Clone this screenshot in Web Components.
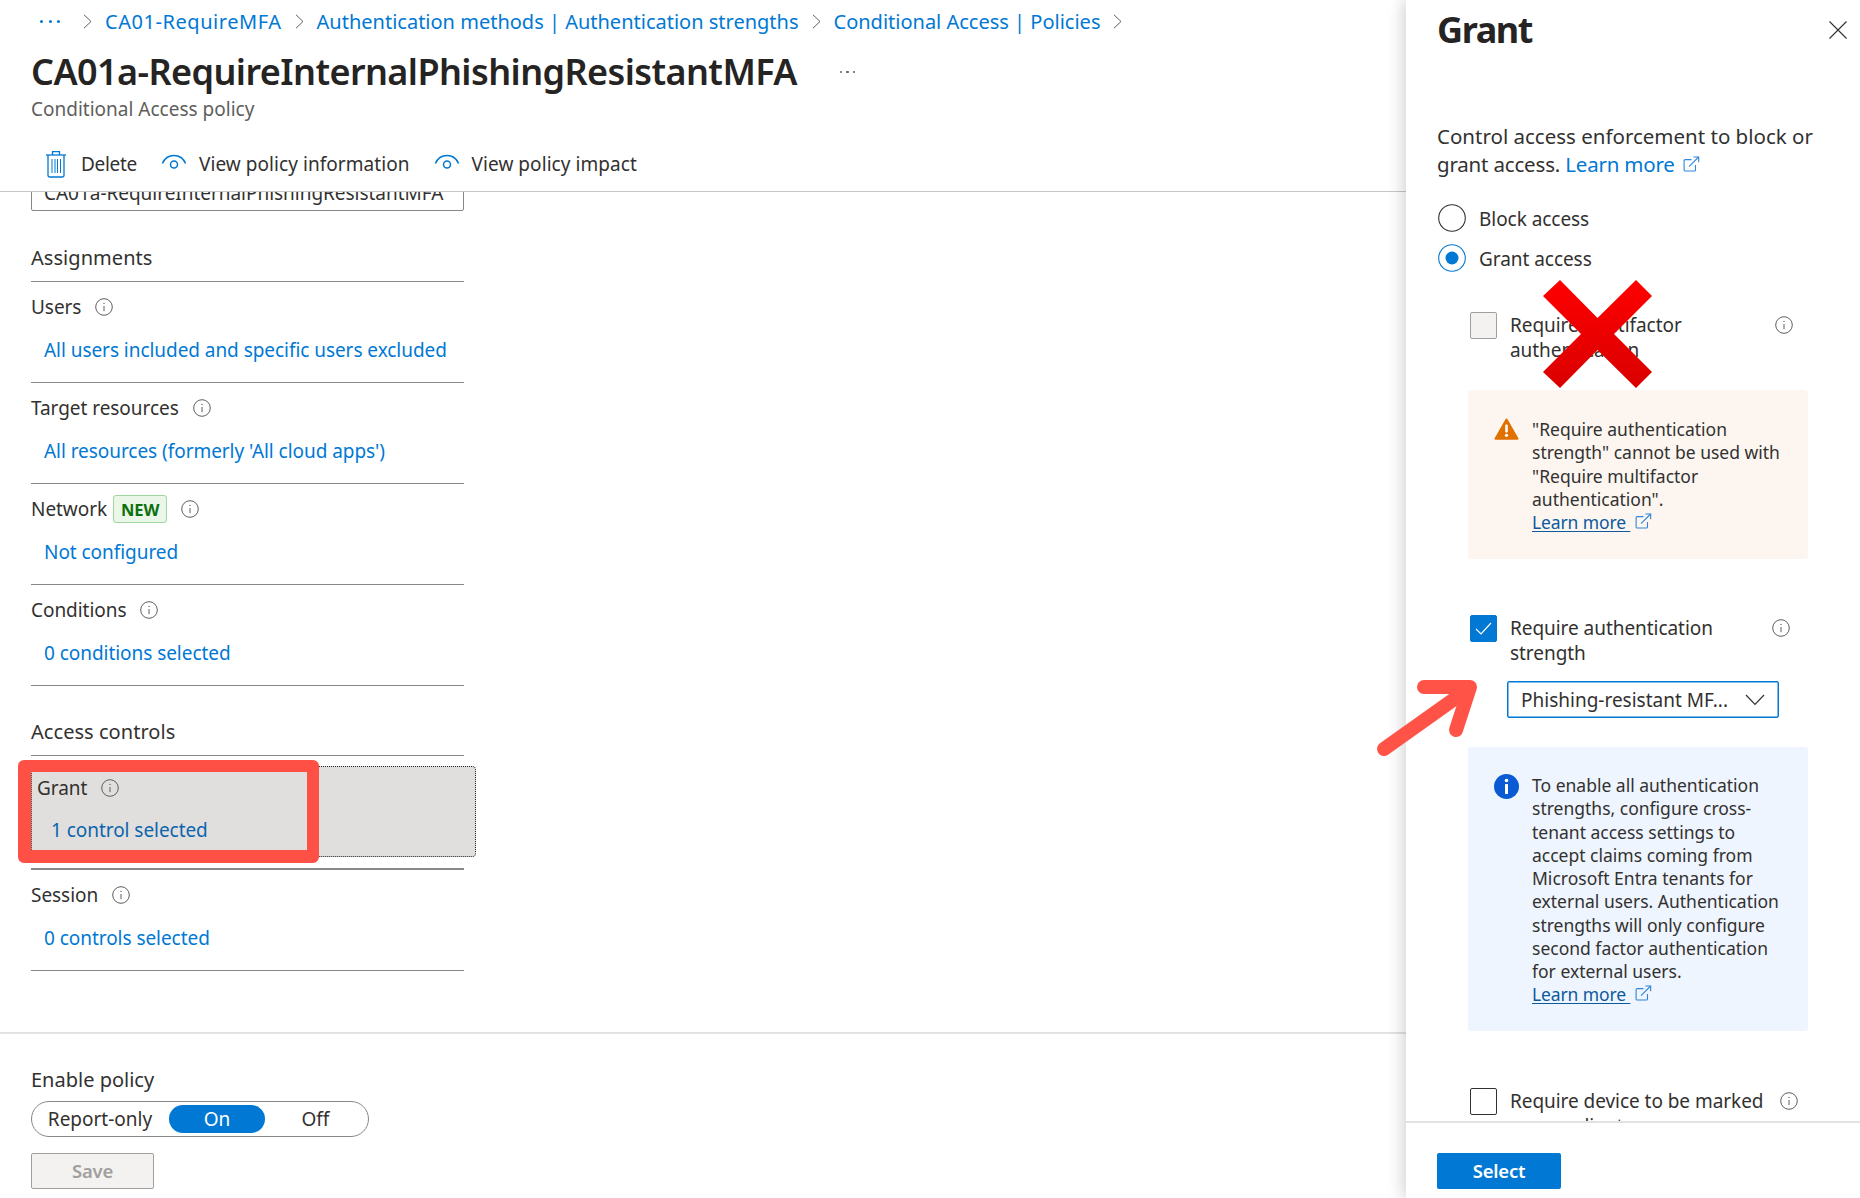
<!DOCTYPE html>
<html lang="en"><head><meta charset="utf-8"><title>Grant</title>
<style>
html,body{margin:0;padding:0;background:#fff}
body{font-family:"Noto Sans","Open Sans",sans-serif;color:#323130;font-size:19px}
</style></head><body>
<policy-app></policy-app>
<script>
const def=(name,html)=>customElements.define(name,class extends HTMLElement{
  connectedCallback(){ if(this.shadowRoot)return; const r=this.attachShadow({mode:'open'}); r.innerHTML=typeof html==='function'?html(this):html; }
});
const a=(e,k,d='')=>e.getAttribute(k)??d;

def('info-icon',`<style>:host{display:inline-flex;width:18px;height:18px;flex:none}svg{display:block}</style>
<svg width="18" height="18" viewBox="0 0 18 18" fill="none" stroke="#605e5c"><circle cx="9" cy="9" r="8.3" stroke-width="1"/><path d="M9 8v5.2" stroke-width="1"/><circle cx="9" cy="5.4" r=".7" fill="#605e5c" stroke="none"/></svg>`);

def('ext-icon',`<style>:host{display:inline-flex;width:17px;height:17px;flex:none;vertical-align:-1px}svg{display:block}</style>
<svg width="17" height="17" viewBox="0 0 17 17" fill="none" stroke="#2f86dc" stroke-width="1.1"><path d="M8.5 3.6H2.2a1.1 1.1 0 0 0-1.1 1.1v9.2c0 .6.5 1.1 1.1 1.1h9.2c.6 0 1.1-.5 1.1-1.1V9"/><path d="M6 10.6 15.6 1"/><path d="M10.4 1h5.3v5.3"/></svg>`);

def('chev-right',`<style>:host{display:inline-flex;flex:none}svg{display:block}</style>
<svg width="9" height="15" viewBox="0 0 9 15" fill="none" stroke="#605e5c" stroke-width="1"><path d="M1 .8 8 7.5 1 14.2"/></svg>`);

def('bread-crumb',`<style>
:host{display:flex;align-items:center;height:42px;font-size:20px;color:#0078d4}
.dots{margin-left:40px;width:20px;display:flex;justify-content:space-between}
.dots i{width:3px;height:3px;background:#0078d4;border-radius:50%}
chev-right{margin:0 13px 0 0}
span{white-space:nowrap;margin-right:13px}
</style>
<div class="dots"><i></i><i></i><i></i></div>
<chev-right style="margin-left:23px;margin-right:13px"></chev-right>
<span style="letter-spacing:.55px">CA01-RequireMFA</span><chev-right></chev-right>
<span>Authentication methods | Authentication strengths</span><chev-right style="margin-right:13px"></chev-right>
<span>Conditional Access | Policies</span><chev-right></chev-right>`);

const trash=`<svg width="22" height="28" viewBox="0 0 22 28" fill="none" stroke="#0078d4" stroke-width="1.3"><path d="M1 5h20"/><path d="M7.5 5V1.6h7V5"/><path d="M3 5v20.6c0 .8.6 1.4 1.4 1.4h13.2c.8 0 1.4-.6 1.4-1.4V5"/><path d="M7 9v14M10 9v14M12.500 9v14M15.500 9v14" stroke-width="1"/></svg>`;
const eye=`<svg width="26" height="22" viewBox="0 0 26 22" fill="none" stroke="#0078d4" stroke-width="1.5"><path d="M1.400 10.500C3.500 5.500 8 2.500 13 2.500s9.500 3 11.600 8"/><circle cx="13" cy="11.500" r="3.500"/></svg>`;
def('tool-button',e=>`<style>:host{display:inline-flex;align-items:center;height:36px;white-space:nowrap;font-size:19px;letter-spacing:.06px;color:#323130}
.i{display:flex;margin-right:${a(e,'gap','12')}px}</style><span class="i">${a(e,'icon')==='trash'?trash:eye}</span><slot></slot>`);

def('page-header',`<style>
:host{display:block;height:191px;border-bottom:1px solid #c8c6c4;box-sizing:content-box}
.t{display:flex;align-items:center;height:44px;margin:8px 0 0 31px}
h1{margin:0;font-size:36px;line-height:44px;font-weight:600;color:#252423;letter-spacing:-.58px;white-space:nowrap}
.more{margin-left:43px;display:flex;gap:4px}.more i{width:2.500px;height:2.500px;background:#605e5c;border-radius:50%}
.s{margin:2px 0 0 31px;font-size:19px;line-height:26px;color:#605e5c}
.b{display:flex;margin:24px 0 0 45px;gap:0}
</style>
<bread-crumb></bread-crumb>
<div class="t"><h1>CA01a-RequireInternalPhishingResistantMFA</h1><div class="more"><i></i><i></i><i></i></div></div>
<div class="s">Conditional Access policy</div>
<div class="b"><tool-button icon="trash" gap="14" style="margin-right:24px;letter-spacing:-.3px">Delete</tool-button><tool-button icon="eye" style="margin-right:24px">View policy information</tool-button><tool-button icon="eye">View policy impact</tool-button></div>`);

def('name-input',`<style>:host{display:block;width:433px;height:36px;margin-top:-17px;box-sizing:border-box;border:1px solid #8a8886;border-radius:2px;padding:0 12px;line-height:34px;font-size:19px;letter-spacing:-.03px;color:#323130;white-space:nowrap;overflow:hidden}</style><slot></slot>`);

def('section-head',e=>`<style>:host{display:block;width:433px;margin-top:${a(e,'top','33')}px;padding:1px 0 10px;border-bottom:1px solid #8a8886;font-size:20px;line-height:26px;letter-spacing:.05px;color:#323130}</style><slot></slot>`);

def('policy-row',e=>{const act=e.hasAttribute('active');return `<style>
:host{display:block;width:${act?'445px':'433px'};box-sizing:border-box;${act?`margin:10px 0 11px;height:91px;border:1px dotted #252423;border-radius:4px;background:#e1dfdd;padding:8px 0 0 5px;`:`padding:12px 0 19px;border-bottom:${a(e,'line','1')}px solid #8a8886;height:${100+ +a(e,'line','1')}px;`}}
.l{display:flex;align-items:center;height:26px;font-size:19px;letter-spacing:-.05px;color:#323130;gap:14px}
.v{margin:${act?'16':'17'}px 0 0 ${act?'14':'13'}px;height:26px;line-height:26px;font-size:19px;letter-spacing:-.05px;color:${act?'#0b64ad':'#0078d4'};white-space:nowrap}
.n{display:flex;align-items:center;gap:6px}
</style><div class="l"><span class="n"><span>${a(e,'label')}</span><slot name="badge"></slot></span><info-icon></info-icon></div><div class="v">${a(e,'value')}</div>`});

def('new-badge',`<style>:host{display:inline-flex;align-items:center;justify-content:center;width:54px;height:28px;box-sizing:border-box;background:#eaf6e8;border:1px solid #9fd89f;border-radius:3px;color:#0e700e;font-weight:700;font-size:16.500px;letter-spacing:-.1px}</style><slot></slot>`);

def('policy-body',`<style>:host{display:block;height:840px;overflow:hidden;padding-left:31px;box-sizing:border-box}</style>
<name-input>CA01a-RequireInternalPhishingResistantMFA</name-input>
<section-head>Assignments</section-head>
<policy-row label="Users" value="All users included and specific users excluded"></policy-row>
<policy-row label="Target resources" value="All resources (formerly 'All cloud apps')" line="1"></policy-row>
<policy-row label="Network" value="Not configured"><new-badge slot="badge">NEW</new-badge></policy-row>
<policy-row label="Conditions" value="0 conditions selected"></policy-row>
<section-head top="32">Access controls</section-head>
<policy-row active label="Grant" value="1 control selected"></policy-row>
<div style="height:2px;width:433px;background:#8a8886"></div>
<policy-row label="Session" value="0 controls selected"></policy-row>`);

def('tri-toggle',`<style>:host{display:flex;align-items:center;width:338px;height:36px;box-sizing:border-box;border:1px solid #8a8886;border-radius:18px;font-size:19px;color:#323130}
.r{width:137px;text-align:center;padding-right:1px;box-sizing:border-box}.o{width:96px;height:28px;line-height:28px;background:#0078d4;color:#fff;border-radius:14px;text-align:center}.f{flex:1;text-align:center;padding-right:2px}</style>
<div class="r">Report-only</div><div class="o">On</div><div class="f">Off</div>`);

def('az-button',e=>{const p=e.hasAttribute('primary');return `<style>:host{display:flex;align-items:center;justify-content:center;width:${a(e,'w','123')}px;height:36px;box-sizing:border-box;padding-bottom:2px;font-size:18.500px;font-weight:600;letter-spacing:-.2px;border-radius:2px;${p?'background:#0078d4;color:#fff;':'background:#f3f2f1;color:#a19f9d;border:1px solid #a19f9d;'}}</style><slot></slot>`});

def('page-footer',`<style>:host{display:block;border-top:2px solid #e4e2e0;padding-left:31px}
.e{margin-top:33px;font-size:20px;line-height:26px;color:#323130}
tri-toggle{margin-top:8px}az-button{margin-top:16px}</style>
<div class="e">Enable policy</div><tri-toggle></tri-toggle><az-button>Save</az-button>`);

def('radio-opt',e=>{const c=e.hasAttribute('checked');return `<style>:host{display:flex;align-items:center;height:28px;font-size:19px;letter-spacing:-.05px;gap:13px;color:#323130}svg{display:block}.t{padding-top:2px}</style>
<svg width="28" height="28" viewBox="0 0 28 28" fill="none"><circle cx="14" cy="14" r="13.300" stroke="${c?'#0078d4':'#323130'}" stroke-width="1.100"/>${c?'<circle cx="14" cy="14" r="6.500" fill="#0078d4"/>':''}</svg><div class="t"><slot></slot></div>`});

def('check-row',e=>{const s=a(e,'state');const box=s==='on'?'background:#0078d4;border-color:#0078d4':s==='dis'?'background:#f3f2f1;border-color:#a19f9d':'background:#fff;border-color:#323130';
return `<style>:host{display:flex;align-items:flex-start;margin-left:32px;font-size:19px;letter-spacing:-.05px;line-height:25px;color:#323130}
.b{width:27px;height:27px;box-sizing:border-box;border:1px solid;border-radius:2px;flex:none;margin-right:13px;display:flex;align-items:center;justify-content:center;${box}}
.t{width:${a(e,'w','264')}px;margin-top:1px}
info-icon{margin-top:4px}</style>
<div class="b">${s==='on'?'<svg width="17" height="13" viewBox="0 0 17 13" fill="none" stroke="#fff" stroke-width="1.200"><path d="M1 7l5 5L16 1"/></svg>':''}</div><div class="t"><slot></slot></div><info-icon></info-icon>`});

const warnI=`<svg width="25" height="22" viewBox="0 0 25 22"><path d="M12.500.500a1 1 0 0 1 .9.500l11 19.300a1 1 0 0 1-.9 1.500H1.500a1 1 0 0 1-.9-1.500L11.600 1a1 1 0 0 1 .9-.5z" fill="#e07000"/><rect x="11.200" y="6.500" width="2.600" height="8" rx="1" fill="#fff"/><circle cx="12.500" cy="17.300" r="1.600" fill="#fff"/></svg>`;
const infoI=`<svg width="25" height="25" viewBox="0 0 25 25"><circle cx="12.500" cy="12.500" r="12.500" fill="#0a5bd3"/><circle cx="12.500" cy="6.500" r="1.800" fill="#fff"/><rect x="11" y="10" width="3" height="10" rx=".6" fill="#fff"/></svg>`;
def('msg-box',e=>{const w=a(e,'kind')==='warn';return `<style>:host{display:flex;width:340px;box-sizing:border-box;margin-left:30px;padding:${w?28:27}px 0 25px 26px;background:${w?'#fdf6f0':'#eff5fe'};border-radius:3px;font-size:17.500px;line-height:23.250px;color:#323130;height:${a(e,'h')}px}
.i{flex:none;width:25px;margin-right:13px;display:flex;align-items:flex-start}.t{width:258px}
u{color:#0b5a9e;text-decoration:underline;text-underline-offset:2px;white-space:pre;letter-spacing:-.12px}
</style><div class="i">${w?warnI:infoI}</div><div class="t"><slot></slot><br><u>Learn more </u> <ext-icon></ext-icon></div>`});

def('auth-select',`<style>:host{display:flex;align-items:center;justify-content:space-between;width:272px;height:37px;margin:15px 0 0 69px;box-sizing:border-box;border:1px solid #0078d4;border-radius:2px;padding:0 13px;font-size:19px;color:#323130;white-space:nowrap;box-shadow:inset 0 0 0 .5px #0078d4}</style><slot></slot>
<svg width="20" height="12" viewBox="0 0 20 12" fill="none" stroke="#323130" stroke-width="1.200"><path d="M1 1l9 9.500L19 1"/></svg>`);

def('grant-panel',`<style>
:host{display:flex;flex-direction:column;width:454px;height:1198px;box-sizing:border-box;flex:none;background:#fff;box-shadow:-4px 0 14px rgba(0,0,0,.16);position:relative;z-index:1}
.scroll{height:1121px;overflow:hidden;padding-left:32px;box-sizing:border-box}
.head{display:flex;justify-content:space-between;align-items:center;height:44px;margin:8px 0 0 -1px;padding-right:13px}
h2{margin:0;font-size:36px;font-weight:700;color:#252423;letter-spacing:-1.4px;line-height:44px}
.d{margin:70px 0 0 -1px;font-size:20.500px;line-height:28px;color:#323130;width:392px}
.d a{color:#0078d4;text-decoration:none;letter-spacing:-.2px}
.d .g{letter-spacing:-.18px}
.x{display:block}
radio-opt{margin-bottom:12px}
.foot{border-top:2px solid #e4e2e0;padding:30px 0 0 31px;flex:1}
</style>
<div class="scroll">
<div class="head"><h2>Grant</h2><svg class="x" width="18" height="18" viewBox="0 0 18 18" stroke="#323130" stroke-width="1.100"><path d="M.5.500l17 17M17.500.500l-17 17"/></svg></div>
<div class="d">Control access enforcement to block or <span class="g">grant access. </span><a>Learn more</a><ext-icon style="margin-left:8px"></ext-icon></div>
<radio-opt style="margin-top:26px">Block access</radio-opt>
<radio-opt checked>Grant access</radio-opt>
<check-row state="dis" w="265" style="margin-top:40px">Require multifactor authentication</check-row>
<msg-box kind="warn" h="169" style="margin-top:27px">"Require authentication strength" cannot be used with "Require multifactor authentication".</msg-box>
<check-row state="on" w="262" style="margin-top:56px">Require authentication strength</check-row>
<auth-select>Phishing-resistant MF...</auth-select>
<msg-box kind="info" h="284" style="margin-top:29px">To enable all authentication strengths, configure cross-tenant access settings to accept claims coming from Microsoft Entra tenants for external users. Authentication strengths will only configure second factor authentication for external users.</msg-box>
<check-row state="off" w="270" style="margin-top:57px">Require device to be marked as compliant</check-row>
</div>
<div class="foot"><az-button primary w="124">Select</az-button></div>`);

def('mark-rect',`<style>:host{position:absolute;z-index:2;left:18px;top:760px;width:301px;height:103px;box-sizing:border-box;border:solid #ff5045;border-width:12px 12px 13px 13px;border-radius:6px}</style>`);
def('mark-x',`<style>:host{position:absolute;z-index:2;left:1543px;top:280px;width:109px;height:108px}svg{display:block}</style>
<svg width="109" height="108" viewBox="0 0 109 108"><defs><linearGradient id="g" x1="0" y1="0" x2="0" y2="1"><stop offset="0" stop-color="#ff0000"/><stop offset="1" stop-color="#d90000"/></linearGradient></defs><polygon fill="url(#g)" points="17,0 54.500,38 93,0 109,16 71,54 109,92 93,108 54.500,70 17,108 0,92 38,54 0,16"/></svg>`);
def('mark-arrow',`<style>:host{position:absolute;z-index:2;left:1373px;top:673px;width:110px;height:90px}svg{display:block}</style>
<svg width="110" height="90" viewBox="0 0 110 90" fill="none" stroke="#ff5347" stroke-width="14" stroke-linecap="round" stroke-linejoin="round"><path d="M11 76 94 17"/><path d="M51 14H97L83 57"/></svg>`);

def('policy-app',`<style>
:host{display:flex;position:relative;width:1860px;height:1198px;overflow:hidden;background:#fff}
.main{flex:1;min-width:0;display:flex;flex-direction:column}
</style>
<div class="main"><page-header></page-header><policy-body></policy-body><page-footer></page-footer></div>
<grant-panel></grant-panel>
<mark-rect></mark-rect><mark-x></mark-x><mark-arrow></mark-arrow>`);
</script>
</body></html>
